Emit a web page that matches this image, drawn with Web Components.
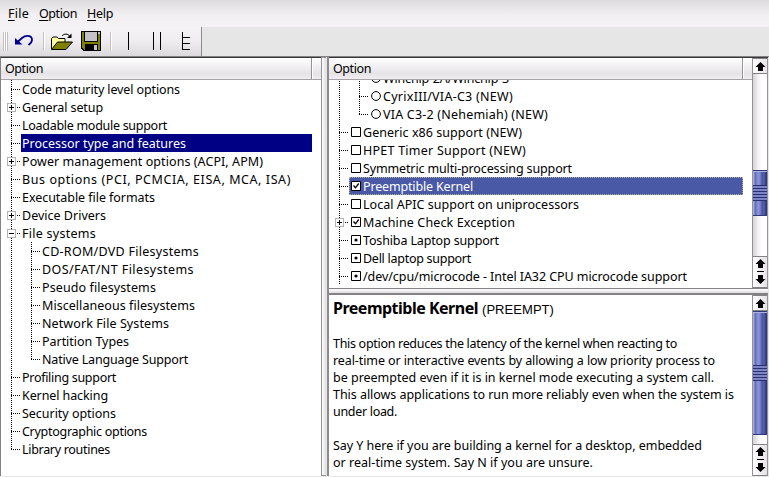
<!DOCTYPE html>
<html lang="en">
<head>
<meta charset="utf-8">
<title>Kernel configuration</title>
<style>
html, body { margin: 0; height: 100%; overflow: hidden; background: #e6e6e6; }
body { font: 12.5px/18px "Noto Sans", "Open Sans", sans-serif; color: #000; }
</style>
</head>
<body>
<config-window></config-window>
<script>
const shadow = (el, html) => {
  const t = document.createElement('template');
  t.innerHTML = html;
  const root = el.attachShadow({ mode: 'open' });
  root.append(t.content.cloneNode(true));
  return root;
};

/* A line of text tracked out to an advance width given in pixels. */
class FitText extends HTMLElement {
  connectedCallback() {
    if (this.shadowRoot) return;
    const r = shadow(this, `<style>:host{display:block;white-space:nowrap}span{display:inline-block;white-space:pre}</style><span><slot></slot></span>`);
    const s = r.querySelector('span'), w = +this.getAttribute('w');
    const n = this.textContent.length;
    if (w) s.style.letterSpacing = ((w - s.getBoundingClientRect().width) / n).toFixed(4) + 'px';
  }
}

class MenuBar extends HTMLElement {
  connectedCallback() {
    shadow(this, `<style>
      :host{display:flex;gap:10px;height:27px;box-sizing:border-box;padding:5px 8px 0;background:linear-gradient(#dedbde,#f1eff1 55%,#f4f2f4)}
      u{text-decoration-thickness:1px;text-underline-offset:2px}
    </style>
    <fit-text w="21"><u>F</u>ile</fit-text><fit-text w="38"><u>O</u>ption</fit-text><fit-text w="26"><u>H</u>elp</fit-text>`);
  }
}

class ToolBar extends HTMLElement {
  connectedCallback() {
    shadow(this, `<style>
      :host{display:flex;height:29px;background:#e6e6e6}
      .bar{display:flex;width:201px;border-right:1px solid #8c8a8c;background:linear-gradient(#f5f3f5,#eeecee 50%,#dcdadc)}
      svg{display:block}
    </style>
    <div class="bar"><svg width="201" height="29" viewBox="0 27 201 29" shape-rendering="crispEdges">
      <path d="M3.5 32v19M5.5 32v19M7.5 32v19M43.5 32v19M110.5 32v19" stroke="#c3c1c3"/>
      <path d="M4.5 32v19M6.5 32v19M44.5 32v19M111.5 32v19" stroke="#fff"/>
      <g shape-rendering="auto">
        <path d="M15 38v6.500h7.500z" fill="#00008b"/>
        <path d="M17.500 42l4.500-4c2-1.800 3.500-2.200 5.500-2.200 2.800 0 4.500 1.700 4.500 4 0 2-1 3.500-3.500 5.200" fill="none" stroke="#00008b" stroke-width="1.800"/>
        <path d="M51.500 49v-10.500l1.500-1.500h4l1.500 1.500h6.500v4" fill="#ffffa0" stroke="#000"/>
        <path d="M51.500 49.500l6-7.500h15l-6.500 7.500z" fill="#808000" stroke="#000"/>
        <path d="M62 36c2-2.600 6-2.600 8 .5" fill="none" stroke="#000"/><path d="M71.500 33.500v4.500h-4.500z"/>
      </g>
      <path d="M81 31h20v20h-18l-2-2z"/>
      <path d="M82 32h18v18h-16l-2-2z" fill="#808000"/>
      <path d="M84 31h14v11h-14z"/><path d="M85 32h12v9h-12z" fill="#c6c3c6"/>
      <path d="M85 44h13v6h-13z"/><path d="M94 45h3v5h-3z" fill="#c6c3c6"/><path d="M98 32h2v2h-2z" fill="#c6c3c6"/>
      <path d="M128.500 32v18M153.500 32v18M160.500 32v18M182.500 32v18M182 37.500h8M182 43.500h8M182 49.500h8" stroke="#000"/>
    </svg></div>`);
  }
}

class ListHeader extends HTMLElement {
  connectedCallback() {
    shadow(this, `<style>
      :host{display:flex;height:22px;flex:none;box-sizing:border-box;border-bottom:1px solid #a5a2a5;background:linear-gradient(#fff,#f2f0f2 40%,#e6e3e6 75%,#f0eef0)}
      .cell{flex:1;padding:2px 0 0 4px;border-right:1px solid #949294}
      .rest{width:8px;border-left:1px solid #fff}
    </style><div class="cell"><fit-text w="38">Option</fit-text></div><div class="rest"></div>`);
  }
}

/* state: off | on | mod | radio; exp: + | - ; last: branch ends at this row */
class TreeRow extends HTMLElement {
  connectedCallback() {
    const a = n => this.getAttribute(n);
    const level = +(a('level') || 0);
    let cells = '';
    for (let i = 0; i <= level; i++) {
      const own = i === level;
      cells += `<i class="${a('last') !== null && own ? 'v end' : 'v'}">${own ? '<b></b>' : ''}${own && a('exp') ? `<svg width="9" height="9" shape-rendering="crispEdges"><path d="M.5.5h8v8h-8z" fill="#fff" stroke="#b5b2b5"/><path d="M2 4.500h5${a('exp') === '+' ? 'M4.500 2v5' : ''}" stroke="#000"/></svg>` : ''}</i>`;
    }
    const marks = { on: '<path d="M2.500 4.500l2 2.300 3.200-4.300" fill="none" stroke="#000" stroke-width="1.300"/>', mod: '<circle cx="5" cy="5" r="1.600"/>', off: '' };
    const st = a('state');
    const mark = !st ? '' : `<svg class="m" width="10" height="10">${st === 'radio' ? '<circle cx="5" cy="5" r="4.400" fill="#fff" stroke="#000"/>' : '<path d="M.5.5h9v9h-9z" fill="#fff" stroke="#000"/>' + marks[st]}</svg>`;
    shadow(this, `<style>
      :host{display:flex;height:18px;flex:none}
      i{position:relative;display:block;width:20px;height:18px;flex:none}
      .v{background:repeating-linear-gradient(#000 0 1px,transparent 1px 2px) 10px 0/1px 18px no-repeat}
      .end{background-size:1px 10px}
      b{position:absolute;left:10px;top:9px;width:10px;height:1px;background:repeating-linear-gradient(90deg,#000 0 1px,transparent 1px 2px)}
      i svg{position:absolute;left:6px;top:5px}
      .label{display:flex;flex:1;padding-left:1px;line-height:19px}
      :host([sel]) .label{color:#fff;background:#000084}
      :host([sel="focus"]) .label{background:#4a59a5;outline:1px dotted #b5b294;outline-offset:-1px}
      .m{margin:4px 2px 0 1px;flex:none}
    </style>${cells}<div class="label">${mark}<fit-text w="${a('w')}">${this.dataset.text}</fit-text></div>`);
  }
}

class ScrollBar extends HTMLElement {
  connectedCallback() {
    const [before, thumb] = this.getAttribute('spans').split(' ');
    const up = 'M6.500 0L11.500 5h-2.500V9H4V5H1.500z', down = 'M6.500 9L11.500 4h-2.500V0H4V4H1.500z';
    shadow(this, `<style>
      :host{display:flex;flex-direction:column;width:16px;flex:none;box-sizing:border-box;border-left:1px solid #949294;border-right:1px solid #949294;background:linear-gradient(90deg,#d6d3d6,#f5f3f5 40%,#fff 60%)}
      .btn{height:16px;box-sizing:border-box;border:1px solid #848284;border-width:1px 0;background:linear-gradient(90deg,#fff,#e6e3e6);display:flex;justify-content:center;align-items:center;flex:none}
      .two{height:32px;margin-top:auto}
      .thumb{height:${thumb}px;margin-top:${before}px;box-sizing:border-box;flex:none;border:1px solid #31397b;border-width:1px 0;display:flex;align-items:center;
        background:linear-gradient(90deg,#a5aade 0 1px,#5a69b5 2px,#8c96d6 5px,#7b86ce 7px,#4a55a5 9px,#5261ad 11px,#31397b 13px);box-shadow:inset 0 1px #adb2e7}
      .grip{width:100%;height:16px;background:repeating-linear-gradient(#293173 0 1px,#7b84c6 1px 3px)}
    </style>
    <div class="btn"><svg width="13" height="9" viewBox="0 0 13 9"><path d="${up}"/></svg></div>
    <div class="thumb"><div class="grip"></div></div>
    <div class="btn two"><svg width="13" height="26" viewBox="0 0 13 26"><path d="${up}"/><path d="M3 12h7v1H3z"/><path transform="translate(0 16)" d="${down}"/></svg></div>`);
  }
}

class HelpPane extends HTMLElement {
  connectedCallback() {
    const lines = [['This option reduces the latency of the kernel when reacting to', 344], ['real-time or interactive events by allowing a low priority process to', 382],
      ['be preempted even if it is in kernel mode executing a system call.', 381], ['This allows applications to run more reliably even when the system is', 401], ['under load.', 64], null,
      ['Say Y here if you are building a kernel for a desktop, embedded', 369], ['or real-time system. Say N if you are unsure.', 260]];
    shadow(this, `<style>
      :host{display:block;flex:1;padding:2px 0 0 4px;overflow:hidden}
      header{display:flex;align-items:baseline;gap:4px;height:22px;line-height:22px;margin-bottom:16px}
      .t{font-size:16px;font-weight:700}
      .s{font-family:"Liberation Sans",sans-serif;font-size:13px}
      .line{height:17px;line-height:17px}
    </style><header><fit-text class="t" w="145">Preemptible Kernel</fit-text><fit-text class="s" w="72">(PREEMPT)</fit-text></header>
    ${lines.map(l => `<div class="line">${l ? `<fit-text w="${l[1]}">${l[0]}</fit-text>` : ''}</div>`).join('')}`);
  }
}

const row = ([text, w, attrs = '']) => `<tree-row data-text="${text}" w="${w}" ${attrs}></tree-row>`;
const left = [['Code maturity level options', 158], ['General setup', 81, 'exp="+"'], ['Loadable module support', 145], ['Processor type and features', 164, 'sel'],
  ['Power management options (ACPI, APM)', 241, 'exp="+"'], ['Bus options (PCI, PCMCIA, EISA, MCA, ISA)', 269], ['Executable file formats', 133], ['Device Drivers', 84, 'exp="+"'],
  ['File systems', 74, 'exp="-"'], ['CD-ROM/DVD Filesystems', 157, 'level="1"'], ['DOS/FAT/NT Filesystems', 152, 'level="1"'], ['Pseudo filesystems', 114, 'level="1"'],
  ['Miscellaneous filesystems', 153, 'level="1"'], ['Network File Systems', 127, 'level="1"'], ['Partition Types', 87, 'level="1"'], ['Native Language Support', 146, 'level="1" last'],
  ['Profiling support', 94], ['Kernel hacking', 86], ['Security options', 94], ['Cryptographic options', 125], ['Library routines', 88, 'last']];
const right = [['Winchip-2A/Winchip-3', 126, 'level="1" state="radio"'], ['CyrixIII/VIA-C3 (NEW)', 130, 'level="1" state="radio"'], ['VIA C3-2 (Nehemiah) (NEW)', 165, 'level="1" state="radio" last'],
  ['Generic x86 support (NEW)', 159, 'state="off"'], ['HPET Timer Support (NEW)', 163, 'state="off"'], ['Symmetric multi-processing support', 209, 'state="off"'],
  ['Preemptible Kernel', 110, 'state="on" sel="focus"'], ['Local APIC support on uniprocessors', 216, 'state="off"'], ['Machine Check Exception', 152, 'state="on" exp="+"'],
  ['Toshiba Laptop support', 136, 'state="mod"'], ['Dell laptop support', 108, 'state="mod"'], ['/dev/cpu/microcode - Intel IA32 CPU microcode support', 324, 'state="mod"']];

class ConfigWindow extends HTMLElement {
  connectedCallback() {
    shadow(this, `<style>
      :host{display:flex;flex-direction:column;width:769px;height:477px;background:#e6e6e6}
      main{display:flex;height:420px;box-sizing:border-box}
      .left{width:321px;display:flex;flex-direction:column;background:#fff;box-sizing:border-box;border:1px solid #848284;border-top-color:#393839;border-width:1px 0 0 1px;height:419px}
      .rows{display:flex;flex-direction:column;flex:1;overflow:hidden}
      .left .rows{margin-right:9px}
      .vsplit{width:5px;height:419px;box-sizing:border-box;border:1px solid #949294;border-right:0;background:linear-gradient(90deg,#fff,#e0dee0)}
      .col{flex:1;display:flex;flex-direction:column;height:419px;border-left:2px solid #8c8a8c;margin-left:1px;margin-right:1px}
      .top{display:flex;height:231px;background:#fff;box-sizing:border-box;border-top:1px solid #393839}
      .list{flex:1;display:flex;flex-direction:column;min-width:0}
      .list .rows{margin-right:9px}
      .list tree-row:first-child{margin-top:-11px}
      .hsplit{height:7px;box-sizing:border-box;border:solid #848284;border-width:1px 0 2px;background:linear-gradient(#fff,#dedcde)}
      .bottom{flex:1;display:flex;background:#fff}
      .gap{height:1px;flex:none;background:#848284}
    </style>
    <menu-bar></menu-bar><tool-bar></tool-bar><div class="gap"></div>
    <main>
      <section class="left"><list-header></list-header><div class="rows">${left.map(row).join('')}</div></section>
      <div class="vsplit"></div>
      <div class="col">
        <section class="top"><div class="list"><list-header></list-header><div class="rows">${right.map(row).join('')}</div></div><scroll-bar spans="96 46"></scroll-bar></section>
        <div class="hsplit"></div>
        <section class="bottom"><help-pane></help-pane><scroll-bar spans="0 124"></scroll-bar></section>
      </div>
    </main>`);
  }
}
for (const [n, c] of Object.entries({ 'fit-text': FitText, 'menu-bar': MenuBar, 'tool-bar': ToolBar, 'list-header': ListHeader, 'tree-row': TreeRow, 'scroll-bar': ScrollBar, 'help-pane': HelpPane, 'config-window': ConfigWindow })) customElements.define(n, c);
</script>
</body>
</html>
